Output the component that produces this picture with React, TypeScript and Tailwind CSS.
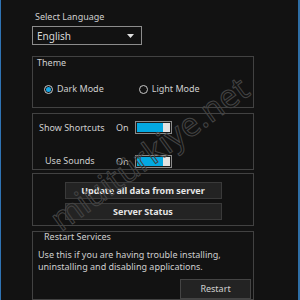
import React from "react";

const font = { fontFamily: '"Noto Sans", "Open Sans", sans-serif' };

function Toggle() {
  return (
    <div className="flex h-[13px] w-[37px] items-stretch border border-[#8a8a8a] bg-[#1a1a1a] p-[1px]">
      <div className="flex-1 bg-[#03a9e2]" />
      <div className="w-[7px] bg-[#e2e2e2]" />
    </div>
  );
}

function Radio({ checked }: { checked: boolean }) {
  return (
    <div className="flex h-[9px] w-[9px] items-center justify-center rounded-full border border-[#c8c8c8]">
      {checked && <div className="h-[5px] w-[5px] rounded-full bg-[#14a6e6]" />}
    </div>
  );
}

export default function App() {
  return (
    <div
      className="relative flex h-[300px] w-[300px] overflow-hidden bg-[#121212] text-[9px] leading-[12px] text-[#cfcfcf]"
      style={font}
    >
      <div className="w-[1px] bg-[#2f73b3]" />
      <div className="flex flex-1 flex-col pl-[31px] pt-[11px]">
        <div className="pl-[3px]">Select Language</div>
        <div className="mt-[3px] flex h-[20px] w-[110px] items-center justify-between border border-[#8c8c8c] pl-[4px] pr-[7px] text-[10px] text-[#d8d8d8]">
          <span>English</span>
          <svg width="7" height="4" viewBox="0 0 7 4">
            <path d="M0 0 H7 L3.5 4 Z" fill="#e0e0e0" />
          </svg>
        </div>

        <div className="mt-[11px] flex h-[55px] w-[222px] flex-col border border-[#424242]">
          <div className="pl-[4px] leading-[11px]">Theme</div>
          <div className="mt-[15px] flex items-center">
            <div className="ml-[11px] flex items-center gap-[4px]">
              <Radio checked />
              <span>Dark Mode</span>
            </div>
            <div className="ml-[35px] flex items-center gap-[4px]">
              <Radio checked={false} />
              <span>Light Mode</span>
            </div>
          </div>
        </div>

        <div className="mt-[5px] flex h-[60px] w-[222px] flex-col border border-[#424242]">
          <div className="mt-[7px] flex items-center">
            <span className="ml-[6px] w-[76px]">Show Shortcuts</span>
            <span className="ml-[1px] w-[19px]">On</span>
            <Toggle />
          </div>
          <div className="mt-[20px] flex items-center">
            <span className="ml-[12px] w-[70px]">Use Sounds</span>
            <span className="ml-[1px] w-[19px] pt-[2px]">On</span>
            <Toggle />
          </div>
        </div>

        <div className="mt-[3px] flex h-[55px] w-[222px] flex-col items-center gap-[4px] border border-[#424242] pt-[8px]">
          <div className="flex h-[17px] w-[157px] items-center justify-center border border-[#3a3a3a] bg-[#232323] font-bold text-[#e6e6e6]">
            Update all data from server
          </div>
          <div className="flex h-[17px] w-[157px] items-center justify-center border border-[#3a3a3a] bg-[#232323] font-bold text-[#e6e6e6]">
            Server Status
          </div>
        </div>

        <div className="mt-[5px] flex h-[70px] w-[222px] flex-col border border-[#424242]">
          <div className="pl-[11px] leading-[9px]">Restart Services</div>
          <div className="mt-[8px] pl-[5px]">
            Use this if you are having trouble installing,
            <br />
            uninstalling and disabling applications.
          </div>
          <div className="mt-[6px] ml-[147px] flex h-[20px] w-[71px] justify-center border border-[#444] bg-[#232323] pt-[3px] text-[#d0d0d0]">
            Restart
          </div>
        </div>
      </div>
      <div className="w-[2px] bg-[#2f6fa6]" />

      <div
        className="pointer-events-none absolute left-[149px] top-[153px] -translate-x-1/2 -translate-y-1/2 -rotate-[36deg] whitespace-nowrap text-[33px] leading-none text-transparent [-webkit-text-stroke:1px_#444444]"
        style={font}
      >
        miuitürkiye.net
      </div>
    </div>
  );
}
